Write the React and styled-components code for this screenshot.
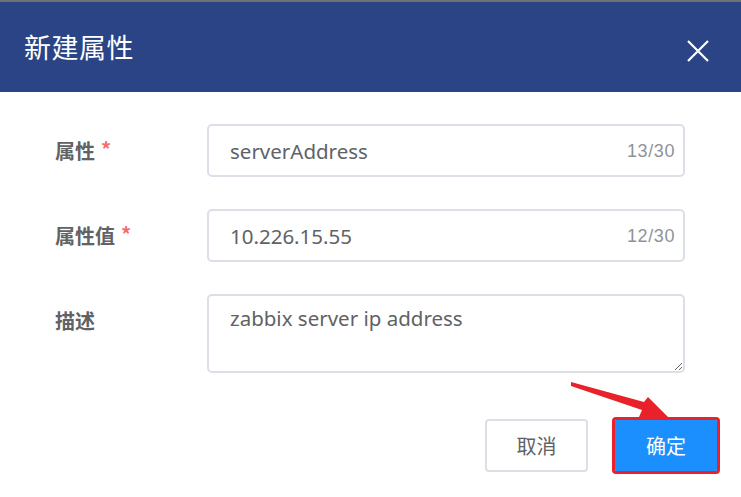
import React from "react";
import styled, { createGlobalStyle } from "styled-components";

const Global = createGlobalStyle`
  html, body { margin: 0; padding: 0; background: #ffffff; }
  body { font-family: "Noto Sans", "Noto Sans CJK SC", sans-serif; }
  * { box-sizing: border-box; }
`;

const Dialog = styled.div`
  position: relative;
  width: 741px;
  height: 497px;
  background: #fff;
  border-top: 2px solid #707070;
  overflow: hidden;
`;

const Header = styled.div`
  height: 90px;
  background: #2a4485;
  display: flex;
  align-items: center;
  justify-content: space-between;
  padding: 0 30px 0 24px;
`;

const Title = styled.div`
  color: #fff;
  font-size: 27px;
  font-family: "Noto Sans CJK SC", sans-serif;
  letter-spacing: 0.5px;
  margin-top: -2px;
`;

const Close = styled.button`
  border: 0;
  background: none;
  padding: 0;
  width: 24px;
  height: 24px;
  display: flex;
  margin-top: 10px;
  cursor: pointer;
`;

const Form = styled.div`
  display: flex;
  flex-direction: column;
  gap: 32px;
  padding: 32px 56px 0 55px;
`;

const Row = styled.div`
  display: grid;
  grid-template-columns: 152px 1fr;
  align-items: start;
`;

const Label = styled.div`
  font-family: "Noto Sans CJK SC", sans-serif;
  font-weight: 700;
  font-size: 20px;
  color: #606266;
  line-height: 53px;
  display: flex;
  gap: 6px;
`;

const Star = styled.span`
  color: #f56c6c;
  font-weight: 700;
  margin-top: -2px;
`;

const Field = styled.div`
  position: relative;
  height: ${(p) => p.$h || 53}px;
`;

const Input = styled.input`
  width: 100%;
  height: 100%;
  border: 2px solid #dcdfe6;
  border-radius: 5px;
  padding: 0 70px 0 21px;
  font-family: "Noto Sans", "Noto Sans CJK SC", sans-serif;
  font-size: 20.5px;
  color: #606266;
  outline: none;
  background: #fff;
`;

const Count = styled.span`
  position: absolute;
  right: 10px;
  top: 50%;
  transform: translateY(-50%);
  font-family: "Liberation Sans", Arial, sans-serif;
  font-size: 18px;
  letter-spacing: 0.6px;
  color: #909399;
`;

const TextArea = styled.textarea`
  width: 100%;
  height: 100%;
  border: 2px solid #dcdfe6;
  border-radius: 5px;
  padding: 8px 21px;
  font-family: "Noto Sans", "Noto Sans CJK SC", sans-serif;
  font-size: 20.5px;
  line-height: 1.4;
  color: #606266;
  outline: none;
  resize: vertical;
  display: block;
`;

const Footer = styled.div`
  display: flex;
  justify-content: flex-end;
  gap: 27px;
  padding: 46px 24px 0 0;
`;

const Button = styled.button`
  width: ${(p) => (p.$primary ? 102 : 103)}px;
  height: ${(p) => (p.$primary ? 51 : 53)}px;
  margin-top: ${(p) => (p.$primary ? 1 : 0)}px;
  border-radius: ${(p) => (p.$primary ? 1 : 4)}px;
  border: ${(p) => (p.$primary ? "0" : "2px solid #dcdfe6")};
  background: ${(p) => (p.$primary ? "#1a8ffd" : "#fff")};
  color: ${(p) => (p.$primary ? "#fff" : "#606266")};
  font-family: "Noto Sans CJK SC", sans-serif;
  font-size: 20px;
  cursor: pointer;
  outline: ${(p) => (p.$primary ? "3px solid #e8212b" : "none")};
  outline-offset: 0;
`;

const Arrow = styled.svg`
  position: absolute;
  left: 0;
  top: 0;
  pointer-events: none;
`;

export default function App() {
  return (
    <>
      <Global />
      <Dialog>
        <Header>
          <Title>新建属性</Title>
          <Close aria-label="close">
            <svg width="22" height="22" viewBox="0 0 22 22">
              <path d="M1 1 L21 21 M21 1 L1 21" stroke="#fff" strokeWidth="2.2" />
            </svg>
          </Close>
        </Header>
        <Form>
          <Row>
            <Label>
              属性<Star>*</Star>
            </Label>
            <Field>
              <Input value="serverAddress" readOnly />
              <Count>13/30</Count>
            </Field>
          </Row>
          <Row>
            <Label>
              属性值<Star>*</Star>
            </Label>
            <Field>
              <Input value="10.226.15.55" readOnly />
              <Count>12/30</Count>
            </Field>
          </Row>
          <Row>
            <Label>描述</Label>
            <Field $h={79}>
              <TextArea value="zabbix server ip address" readOnly />
            </Field>
          </Row>
        </Form>
        <Footer>
          <Button>取消</Button>
          <Button $primary>确定</Button>
        </Footer>
        <Arrow width="741" height="497" viewBox="0 0 741 497">
          <polygon
            points="571,380 644,400 648,395 668,415 639,415 642,408 571,384"
            fill="#e8212b"
          />
        </Arrow>
      </Dialog>
    </>
  );
}
